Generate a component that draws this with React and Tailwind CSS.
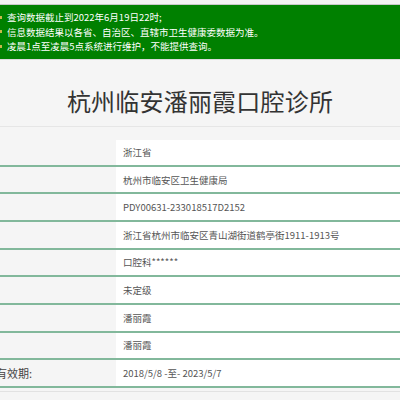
import React from 'react';

const notices = [
  '查询数据截止到2022年6月19日22时;',
  '信息数据结果以各省、自治区、直辖市卫生健康委数据为准。',
  '凌晨1点至凌晨5点系统进行维护，不能提供查询。',
];

const rows = [
  { label: '所在省份:', value: '浙江省' },
  { label: '登记机关:', value: '杭州市临安区卫生健康局' },
  { label: '登记号:', value: 'PDY00631-233018517D2152' },
  { label: '地址:', value: '浙江省杭州市临安区青山湖街道鹤亭街1911-1913号' },
  { label: '诊疗科目:', value: '口腔科******' },
  { label: '医院等级:', value: '未定级' },
  { label: '法人:', value: '潘丽霞' },
  { label: '负责人:', value: '潘丽霞' },
  { label: '执业许可证有效期:', value: '2018/5/8 -至- 2023/5/7' },
];

export default function App() {
  return (
    <div
      className="w-[400px] h-[400px] overflow-hidden bg-[#f5f5f5]"
      style={{ fontFamily: '"Noto Sans CJK SC", "Noto Sans", sans-serif' }}
    >
      <div className="h-[5px] bg-[#f2f2f2] border-b border-[#c8c8c8]"></div>

      <div className="bg-[#008000] pt-[5px] pb-[5px] border-b border-[#dcdcdc]">
        {notices.map((t, i) => (
          <div key={i} className="flex items-center h-[14.5px] text-[9.5px] leading-[14.5px] text-white">
            <span className="w-[2px] h-[3px] bg-[#c9b84a] mr-[5px]"></span>
            <span>{t}</span>
          </div>
        ))}
      </div>

      <div className="pt-[26px] pb-[10px] border-b border-[#e6e6e6] text-center">
        <h1 className="text-[24px] leading-[30px] text-[#333] tracking-[0.2px]">杭州临安潘丽霞口腔诊所</h1>
      </div>

      <div className="mt-[13px] ml-[-68px] w-[468px]">
        {rows.map((r, i) => (
          <div
            key={i}
            className={`flex ${i === 0 ? 'h-[27.3px]' : 'h-[27.66px]'} border-b-2 border-[#82b89b]`}
          >
            <div className="w-[184px] shrink-0 pl-[9px] flex items-center text-[11px] text-[#444] whitespace-nowrap">
              {r.label}
            </div>
            <div className="flex-1 bg-white pl-[7px] flex items-center text-[9.5px] text-[#555] whitespace-nowrap">
              {r.value}
            </div>
          </div>
        ))}
        <div className="mt-[3px] border-t border-[#e2e2e2]"></div>
      </div>
    </div>
  );
}
